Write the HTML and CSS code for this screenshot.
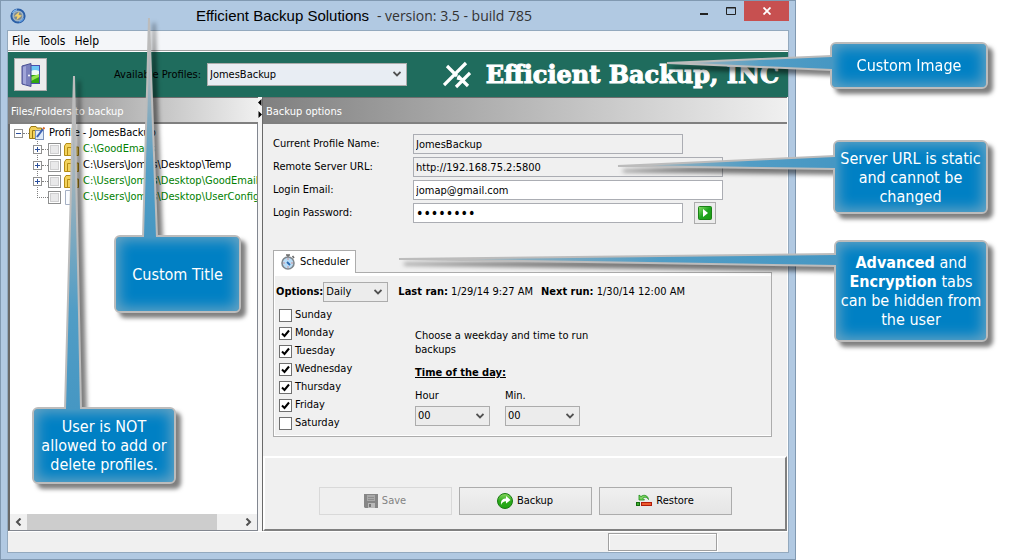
FILE: index.html
```
<!DOCTYPE html>
<html lang="en">
<head>
    <meta charset="UTF-8">
    <meta name="viewport" content="width=device-width, initial-scale=1.0">
    <title>Efficient Backup Solutions</title>
    <link rel="stylesheet" href="styles.css">
</head>
<body>
    <div class="window">
        <!-- Title bar -->
        <header class="title-bar">
            <svg class="app-icon" viewBox="0 0 16 16">
                <circle cx="8" cy="8" r="6.600" fill="#9fb4c6" stroke="#2a5ea6" stroke-width="2"/>
                <path d="M2.500 5 A6.300 6.300 0 0 1 7 1.800" stroke="#7db2e8" stroke-width="1.400" fill="none"/>
                <path d="M9 13.800 A6 6 0 0 0 13.600 10" stroke="#5f9be0" stroke-width="1.200" fill="none"/>
                <circle cx="8" cy="8" r="4" fill="#7d8a90"/>
                <path d="M9.500 3.500 L4 8.500 L7.400 8.600 L6.400 12.300 L12 7.400 L8.600 7 Z" fill="#f3d06a"/>
            </svg>
            <h1 class="title">Efficient Backup Solutions <span class="version">&nbsp;- version: 3.5 - build 785</span></h1>
            <div class="window-buttons">
                <button class="win-btn" aria-label="Minimize"><svg width="10" height="10" viewBox="0 0 10 10"><rect x="1" y="7" width="8" height="2" fill="#222"/></svg></button>
                <button class="win-btn" aria-label="Maximize"><svg width="10" height="10" viewBox="0 0 10 10"><path d="M.5 1.5 H9.5 V8.5 H.5 Z M0 2 H10" fill="none" stroke="#222"/></svg></button>
                <button class="win-btn close-btn" aria-label="Close"><svg width="8" height="8" viewBox="0 0 8 8"><path d="M.5 .5 L7.5 7.5 M7.5 .5 L.5 7.5" stroke="#fff" stroke-width="1.8"/></svg></button>
            </div>
        </header>

        <div class="client">
            <nav class="menu">
                <a href="#">File</a>
                <a href="#">Tools</a>
                <a href="#">Help</a>
            </nav>

            <!-- Toolbar -->
            <div class="toolbar">
                <button class="exit-btn" aria-label="Exit">
                    <svg width="20" height="24" viewBox="0 0 20 24">
                        <rect x="8" y="2" width="11" height="19" fill="#4a50ad"/>
                        <rect x="10" y="3" width="8" height="9" fill="#6cc6f5"/>
                        <path d="M10 8 Q14 6 18 8 V12 H10 Z" fill="#eefaf6"/>
                        <rect x="10" y="12" width="8" height="8" fill="#2fa50f"/>
                        <path d="M10 14 L18 11 V14 L10 18 Z" fill="#93e24c"/>
                        <path d="M1 3 L10 .5 V23.500 L1 21 Z" fill="#7a80bd" stroke="#4a4f94"/>
                        <path d="M2 4 L5 3 V21.500 L2 20.500 Z" fill="#a0a5d8"/>
                        <circle cx="8" cy="12.500" r="1" fill="#fff"/>
                    </svg>
                </button>
                <label class="profiles-label" for="profiles">Available Profiles:</label>
                <select id="profiles" class="select profiles">
                    <option>JomesBackup</option>
                </select>
                <div class="brand">
                    <svg width="28" height="28" viewBox="0 0 28 28">
                        <path d="M4 5 L14 15 M15 15 L25 25 M23 2 L1 24 M14 17 L18 18 M27 12 L13 26" stroke="#fff" stroke-width="3.200" fill="none"/>
                    </svg>
                    <span>Efficient Backup, INC</span>
                </div>
            </div>

            <main class="panels">
                <!-- Folder tree -->
                <section class="files">
                    <h2 class="panel-head">Files/Folders to backup</h2>
                    <div class="tree-box">
                        <div class="tree">
                            <div class="node root">
                                <button class="toggle" aria-label="Collapse">
                                    <svg width="9" height="9" viewBox="0 0 9 9"><rect x=".5" y=".5" width="8" height="8" fill="#fff" stroke="#919191"/><path d="M2 4.500 H7" stroke="#2b4f9c"/></svg>
                                </button>
                                <i class="dots"></i>
                                <svg width="16" height="14" viewBox="0 0 16 14">
                                    <path d="M.5 12.500 V3 L2 .5 H7 L8 2 H12.500 V12.500 Z" fill="#f3d25c" stroke="#9c7a14"/>
                                    <path d="M3.500 12.500 V4.500 H12" fill="none" stroke="#9c7a14"/>
                                    <rect x="6.500" y="4.500" width="8" height="9" fill="#dfeaf9" stroke="#7a93bd"/>
                                    <path d="M8 11 L14 3" stroke="#3b62b5" stroke-width="2"/>
                                    <path d="M14 3 L15.500 1.500" stroke="#d8662b" stroke-width="2"/>
                                </svg>
                                <span class="name">Profile - JomesBackup</span>
                            </div>
                            <ul>
                                <li class="node">
                                    <button class="toggle" aria-label="Expand"><svg width="9" height="9" viewBox="0 0 9 9"><rect x=".5" y=".5" width="8" height="8" fill="#fff" stroke="#919191"/><path d="M2 4.500 H7 M4.500 2 V7" stroke="#2b4f9c"/></svg></button>
                                    <i class="dots"></i>
                                    <input type="checkbox" id="f1">
                                    <svg width="15" height="13" viewBox="0 0 15 13"><path d="M.5 12.500 V3 L2 .5 H7 L8 2 H11.500 V4 H14.500 V12.500 Z" fill="#f3d25c" stroke="#b58c14"/><path d="M3.500 12.500 V4.500 H12 V12.500" fill="none" stroke="#b58c14"/></svg>
                                    <label class="name green" for="f1">C:\GoodEmails</label>
                                </li>
                                <li class="node">
                                    <button class="toggle" aria-label="Expand"><svg width="9" height="9" viewBox="0 0 9 9"><rect x=".5" y=".5" width="8" height="8" fill="#fff" stroke="#919191"/><path d="M2 4.500 H7 M4.500 2 V7" stroke="#2b4f9c"/></svg></button>
                                    <i class="dots"></i>
                                    <input type="checkbox" id="f2">
                                    <svg width="15" height="13" viewBox="0 0 15 13"><path d="M.5 12.500 V3 L2 .5 H7 L8 2 H11.500 V4 H14.500 V12.500 Z" fill="#f3d25c" stroke="#b58c14"/><path d="M3.500 12.500 V4.500 H12 V12.500" fill="none" stroke="#b58c14"/></svg>
                                    <label class="name" for="f2">C:\Users\Jomes\Desktop\Temp</label>
                                </li>
                                <li class="node">
                                    <button class="toggle" aria-label="Expand"><svg width="9" height="9" viewBox="0 0 9 9"><rect x=".5" y=".5" width="8" height="8" fill="#fff" stroke="#919191"/><path d="M2 4.500 H7 M4.500 2 V7" stroke="#2b4f9c"/></svg></button>
                                    <i class="dots"></i>
                                    <input type="checkbox" id="f3">
                                    <svg width="15" height="13" viewBox="0 0 15 13"><path d="M.5 12.500 V3 L2 .5 H7 L8 2 H11.500 V4 H14.500 V12.500 Z" fill="#f3d25c" stroke="#b58c14"/><path d="M3.500 12.500 V4.500 H12 V12.500" fill="none" stroke="#b58c14"/></svg>
                                    <label class="name green" for="f3">C:\Users\Jomes\Desktop\GoodEmailsi</label>
                                </li>
                                <li class="node leaf">
                                    <i class="dots"></i>
                                    <input type="checkbox" id="f4">
                                    <svg width="15" height="15" viewBox="0 0 15 15"><path d="M1.500 .5 H9 L12.500 4 V14.500 H1.500 Z" fill="#fafcff" stroke="#a5b0c4"/></svg>
                                    <label class="name green" for="f4">C:\Users\Jomes\Desktop\UserConfig-</label>
                                </li>
                            </ul>
                        </div>
                        <div class="scrollbar">
                            <button class="scroll-arrow" aria-label="Scroll left"><svg width="7" height="8" viewBox="0 0 7 8"><path d="M5.500 .5 L2 4 L5.500 7.500" fill="none" stroke="#505050" stroke-width="2"/></svg></button>
                            <div class="track"><div class="thumb"></div></div>
                            <button class="scroll-arrow" aria-label="Scroll right"><svg width="7" height="8" viewBox="0 0 7 8"><path d="M1.500 .5 L5 4 L1.500 7.500" fill="none" stroke="#505050" stroke-width="2"/></svg></button>
                        </div>
                    </div>
                </section>

                <div class="splitter">
                    <svg width="4" height="22" viewBox="0 0 4 22"><path d="M3.500 2 V9 L0 5.500 Z M.5 14 V21 L4 17.500 Z" fill="#000"/></svg>
                </div>

                <!-- Backup options -->
                <section class="options">
                    <h2 class="panel-head">Backup options</h2>
                    <div class="options-body">
                        <form class="fields">
                            <label for="profile-name">Current Profile Name:</label>
                            <div><input class="short" type="text" id="profile-name" value="JomesBackup" readonly></div>
                            <label for="server-url">Remote Server URL:</label>
                            <div><input type="text" id="server-url" value="http://192.168.75.2:5800" readonly></div>
                            <label for="email">Login Email:</label>
                            <div><input type="text" id="email" value="jomap@gmail.com"></div>
                            <label for="password">Login Password:</label>
                            <div class="password-row">
                                <input class="short" type="password" id="password" value="password">
                                <button type="button" class="go-btn" aria-label="Connect">
                                    <svg width="14" height="14" viewBox="0 0 14 14">
                                        <defs><linearGradient id="go" x1="0" y1="0" x2="1" y2="1"><stop offset="0" stop-color="#8be06a"/><stop offset=".5" stop-color="#1fa51f"/><stop offset="1" stop-color="#1c9a10"/></linearGradient></defs>
                                        <rect x=".5" y=".5" width="13" height="13" rx="1" fill="url(#go)" stroke="#1b8116"/>
                                        <path d="M5 3 L10 7 L5 11 Z" fill="#fff"/>
                                    </svg>
                                </button>
                            </div>
                        </form>

                        <div class="tabs">
                            <button class="tab">
                                <svg width="14" height="16" viewBox="0 0 14 16">
                                    <path d="M5 1 H9 M7 1 V3 M11.500 2 L13 4" stroke="#6a6a6a" stroke-width="1.600"/>
                                    <circle cx="7" cy="9" r="6" fill="#b9dcf6" stroke="#7f868c" stroke-width="1.600"/>
                                    <path d="M6 8 L9 11" stroke="#2869b0" stroke-width="1.800"/>
                                    <path d="M7 4.500 V5.500 M7 12.500 V13.500 M2.500 9 H3.500 M10.500 9 H11.500" stroke="#e0503c"/>
                                </svg>
                                Scheduler
                            </button>
                        </div>
                        <div class="tab-pane">
                            <div class="schedule-row">
                                <label for="period"><b>Options:</b></label>
                                <select id="period" class="select period"><option>Daily</option></select>
                                <span class="ran"><b>Last ran:</b> 1/29/14 9:27 AM</span>
                                <span class="next"><b>Next run:</b> 1/30/14 12:00 AM</span>
                            </div>
                            <div class="schedule-body">
                                <div class="days">
                                    <label><input type="checkbox">Sunday</label>
                                    <label><input type="checkbox" checked>Monday</label>
                                    <label><input type="checkbox" checked>Tuesday</label>
                                    <label><input type="checkbox" checked>Wednesday</label>
                                    <label><input type="checkbox" checked>Thursday</label>
                                    <label><input type="checkbox" checked>Friday</label>
                                    <label><input type="checkbox">Saturday</label>
                                </div>
                                <div class="time">
                                    <p class="hint">Choose a weekday and time to run backups</p>
                                    <h3>Time of the day:</h3>
                                    <div class="time-selects">
                                        <div>
                                            <label for="hour">Hour</label>
                                            <select id="hour" class="select"><option>00</option></select>
                                        </div>
                                        <div>
                                            <label for="min">Min.</label>
                                            <select id="min" class="select"><option>00</option></select>
                                        </div>
                                    </div>
                                </div>
                            </div>
                        </div>
                    </div>

                    <div class="actions">
                        <button class="action-btn" disabled>
                            <svg width="14" height="14" viewBox="0 0 14 14"><path d="M0 0 H14 V14 H1 L0 13 Z" fill="#868686"/><rect x="3" y="1" width="8" height="6" fill="#a9a9a9"/><path d="M4 3.500 H10 M4 5.500 H10" stroke="#8d8d8d"/><rect x="4" y="9" width="7" height="5" fill="#b9b9b9"/><rect x="5" y="10" width="2" height="3" fill="#777"/></svg>
                            Save
                        </button>
                        <button class="action-btn">
                            <svg width="16" height="16" viewBox="0 0 16 16">
                                <defs><linearGradient id="ball" x1="0" y1="0" x2="0" y2="1"><stop offset="0" stop-color="#8ad85f"/><stop offset=".5" stop-color="#2cab1c"/><stop offset="1" stop-color="#1fa312"/></linearGradient></defs>
                                <circle cx="8" cy="8" r="7.500" fill="url(#ball)" stroke="#187a12"/>
                                <path d="M4 12 C3.500 7 6 5.500 9 5.500 V3 L13.500 7 L9 10.500 V8.300 C6.500 8.300 5 9.500 4 12 Z" fill="#fff"/>
                            </svg>
                            Backup
                        </button>
                        <button class="action-btn restore">
                            <svg width="16" height="14" viewBox="0 0 16 14">
                                <rect x=".5" y="8.500" width="3" height="3" fill="#3fae2c" stroke="#146b0f"/>
                                <rect x="5.500" y="8.500" width="10" height="3" fill="#ee5a2c" stroke="#b01c0c"/>
                                <path d="M3 1 V6 H8.500 L6.800 4.300 C8.500 2.500 11 3 12.500 5.500 C12 1.500 8 0 5 2.600 Z" fill="#7dd460" stroke="#178a14" stroke-width=".8"/>
                            </svg>
                            Restore
                        </button>
                    </div>
                </section>
            </main>

            <footer class="status-bar"><div class="status-cell"></div></footer>
        </div>
    </div>

    <!-- Callouts -->
    <aside class="callout callout-image">
        <svg class="tail" width="166" height="16" viewBox="0 0 166 16">
            <defs><linearGradient id="tail-h"><stop offset="0" stop-color="#b9bcbd"/><stop offset=".3" stop-color="#84acc0"/><stop offset=".6" stop-color="#529dc5"/><stop offset="1" stop-color="#4697c3"/></linearGradient></defs>
            <path d="M166 1 L1 8 L166 15" fill="url(#tail-h)" stroke="#bcbcbc" stroke-width="2"/>
        </svg>
        <p>Custom Image</p>
    </aside>
    <aside class="callout callout-url">
        <svg class="tail" width="218" height="16" viewBox="0 0 218 16">
            <path d="M218 2 L1 12 L218 15" fill="url(#tail-h)" stroke="#bcbcbc" stroke-width="2"/>
        </svg>
        <p>Server URL is static and cannot be changed</p>
    </aside>
    <aside class="callout callout-tabs">
        <svg class="tail" width="438" height="16" viewBox="0 0 438 16">
            <path d="M438 2 L1 7 L438 14" fill="url(#tail-h)" stroke="#bcbcbc" stroke-width="2"/>
        </svg>
        <p><b>Advanced</b> and <b>Encryption</b> tabs can be hidden from the user</p>
    </aside>
    <aside class="callout callout-title">
        <svg class="tail" width="16" height="220" viewBox="0 0 16 220">
            <defs><linearGradient id="tail-v" x1="0" y1="0" x2="0" y2="1"><stop offset="0" stop-color="#b9bcbd"/><stop offset=".3" stop-color="#a0b3bc"/><stop offset=".7" stop-color="#529dc5"/><stop offset="1" stop-color="#4697c3"/></linearGradient></defs>
            <path d="M1 220 L7 1 L15 220" fill="url(#tail-v)" stroke="#bcbcbc" stroke-width="2"/>
        </svg>
        <p>Custom Title</p>
    </aside>
    <aside class="callout callout-profiles">
        <svg class="tail" width="18" height="334" viewBox="0 0 18 334">
            <path d="M1 334 L10 1 L17 334" fill="url(#tail-v)" stroke="#bcbcbc" stroke-width="2"/>
        </svg>
        <p>User is NOT allowed to add or delete profiles.</p>
    </aside>
</body>
</html>
```
FILE: styles.css
```
* {
    margin: 0;
    padding: 0;
    box-sizing: border-box;
}
body {
    position: relative;
    min-height: 100vh;
    padding-right: 217px;
    display: flex;
    background: white;
    color: black;
    font-family: "DejaVu Sans Condensed", "DejaVu Sans", sans-serif;
    font-size: 11px;
    line-height: 14px;
}
button, input, select {
    font: inherit;
    color: inherit;
}
svg {
    display: block;
    flex: none;
}
.window {
    flex: 1;
    display: flex;
    flex-direction: column;
    border: 1px solid #8199b1;
    background: #b1c9e2;
    padding: 0 6px 6px;
}

/* Title bar */
.title-bar {
    display: flex;
    align-items: flex-start;
    height: 29px;
}
.app-icon {
    width: 16px;
    height: 16px;
    margin: 7px 0 0 3px;
}
.title {
    flex: 1;
    padding-left: 12px;
    text-align: center;
    font-family: "Liberation Sans", Arial, sans-serif;
    font-size: 15px;
    font-weight: normal;
    line-height: 29px;
}
.version {
    font-family: "Open Sans", sans-serif;
    font-size: 14px;
    color: #333;
}
.window-buttons {
    display: flex;
}
.win-btn {
    width: 27px;
    height: 20px;
    display: flex;
    align-items: center;
    justify-content: center;
    border: none;
    background: none;
}
.close-btn {
    width: 45px;
    background: #c75050;
}

/* Client area */
.client {
    flex: 1;
    display: flex;
    flex-direction: column;
    border: 1px solid #93a9be;
    background: #f0f0f0;
}
.menu {
    display: flex;
    gap: 9px;
    padding: 2px 4px;
    height: 20px;
    background: #f4f6f9;
    border-bottom: 1px solid #a0a0a0;
    font-size: 12px;
    line-height: 16px;
}
.menu a {
    color: black;
    text-decoration: none;
}
.toolbar {
    display: flex;
    align-items: center;
    height: 46px;
    padding: 0 9px 0 6px;
    border-top: 1px solid white;
    background: #1f6c5d;
}
.exit-btn {
    width: 33px;
    height: 33px;
    display: flex;
    align-items: center;
    justify-content: center;
    border: 1px solid #adadad;
    background: #ececec;
}
.profiles-label {
    flex: 0 0 154px;
    text-align: right;
    margin-right: 6px;
}
.select {
    appearance: none;
    height: 20px;
    padding: 0 16px 0 2px;
    border: 1px solid #acacac;
    border-radius: 0;
    background: #ececec url("data:image/svg+xml,%3Csvg xmlns='http://www.w3.org/2000/svg' width='8' height='7'%3E%3Cpath d='M.5 1 L4 4.500 L7.500 1' fill='none' stroke='%23505050' stroke-width='1.800'/%3E%3C/svg%3E") no-repeat right 5px center;
}
.profiles {
    flex: 0 0 200px;
    height: 23px;
    background-color: #e8edf3;
}
.brand {
    flex: 1;
    display: flex;
    align-items: center;
    justify-content: flex-end;
    gap: 15px;
    color: white;
    font-family: "DejaVu Serif", serif;
    font-size: 24px;
    font-weight: bold;
    line-height: 28px;
    white-space: nowrap;
    -webkit-text-stroke: 1px white;
}

/* Panels */
.panels {
    flex: 1;
    display: flex;
    min-height: 0;
}
.panel-head {
    height: 27px;
    padding: 0 3px;
    border-top: 1px solid #6e6e6e;
    border-bottom: 2px solid #808080;
    background: linear-gradient(to right, #808080, #f0f0f0);
    color: white;
    font-size: 11px;
    font-weight: normal;
    line-height: 27px;
}
.files {
    flex: 0 0 250px;
    min-width: 0;
    display: flex;
    flex-direction: column;
}
.tree-box {
    flex: 1;
    display: flex;
    flex-direction: column;
    border: 1px solid #828790;
    border-left: 2px solid #696969;
    border-top: none;
    background: white;
}
.tree {
    flex: 1;
    overflow: hidden;
    padding: 1px 0 0 4px;
}
.tree ul {
    list-style: none;
    padding-left: 19px;
    background: repeating-linear-gradient(#808080 0 1px, white 1px 2px) no-repeat 23px 0 / 1px 56px;
}
.node {
    display: flex;
    align-items: center;
    height: 16px;
    white-space: nowrap;
}
.toggle {
    flex: none;
    border: none;
    background: none;
}
.dots {
    flex: none;
    width: 6px;
    border-top: 1px dotted #808080;
}
.leaf {
    padding-left: 4px;
}
.leaf .dots {
    width: 11px;
}
.node input {
    flex: none;
    appearance: none;
    width: 13px;
    height: 13px;
    margin-right: 3px;
    border: 1px solid #8e8f8f;
    background: #e9e9ea;
    box-shadow: inset 0 0 0 1px white, inset 0 0 0 2px #cfcfd0;
}
.name {
    margin-left: 4px;
}
.green {
    color: #008000;
}
.scrollbar {
    display: flex;
    height: 16px;
    background: #f0f0f0;
}
.scroll-arrow {
    width: 17px;
    display: flex;
    align-items: center;
    justify-content: center;
    border: none;
    background: none;
}
.track {
    flex: 1;
}
.thumb {
    width: 89%;
    height: 100%;
    background: #cdcdcd;
}
.splitter {
    flex: 0 0 4px;
    background: #f5f5f5;
}
.options {
    flex: 1;
    display: flex;
    flex-direction: column;
    border-left: 1px solid #696969;
    border-right: 1px solid white;
}
.options-body {
    flex: 1;
    padding: 10px 15px 0 10px;
}
.fields {
    display: grid;
    grid-template-columns: 140px 1fr;
    row-gap: 3px;
    align-items: center;
}
.fields input {
    display: block;
    width: 310px;
    height: 20px;
    padding: 0 2px;
    border: 1px solid #abadb3;
    background: white;
    outline: none;
}
.fields input.short {
    width: 270px;
}
.fields input[readonly] {
    background: #f0f0f0;
}
.fields input[type="password"] {
    font-size: 14px;
}
.password-row {
    display: flex;
    align-items: center;
    gap: 11px;
    height: 20px;
}
.go-btn {
    width: 22px;
    height: 22px;
    display: flex;
    align-items: center;
    justify-content: center;
    border: 1px solid #acacac;
    background: #ececec;
}

/* Scheduler tab */
.tabs {
    display: flex;
    margin-top: 27px;
}
.tab {
    position: relative;
    z-index: 1;
    display: flex;
    align-items: center;
    gap: 5px;
    height: 23px;
    margin-bottom: -1px;
    padding: 0 5px 0 7px;
    border: 1px solid #acacac;
    border-bottom: none;
    background: white;
}
.tab-pane {
    padding: 5px 3px 4px 2px;
    border: 1px solid #acacac;
    background: #f0f0f0;
    box-shadow: inset 0 3px 0 white, inset 1px -1px 0 white;
}
.schedule-row {
    display: flex;
    align-items: center;
    height: 28px;
}
.period {
    width: 65px;
    margin-right: 10px;
}
.next {
    margin-left: 8px;
}
.schedule-body {
    display: flex;
}
.days {
    width: 139px;
    padding-left: 3px;
}
.days label {
    display: flex;
    align-items: center;
    gap: 3px;
    height: 18px;
}
.days input {
    appearance: none;
    width: 13px;
    height: 13px;
    border: 1px solid #707070;
    background: white no-repeat center;
}
.days input:checked {
    background-image: url("data:image/svg+xml,%3Csvg xmlns='http://www.w3.org/2000/svg' width='9' height='9'%3E%3Cpath d='M1 4.500 L3.500 7 L8 1.500' fill='none' stroke='black' stroke-width='2'/%3E%3C/svg%3E");
}
.time {
    padding-top: 23px;
}
.hint {
    width: 190px;
}
.time h3 {
    margin: 9px 0;
    font-size: 11px;
    line-height: 14px;
    text-decoration: underline;
}
.time-selects {
    display: flex;
    gap: 15px;
}
.time-selects label {
    display: block;
    margin-bottom: 3px;
}
.time-selects .select {
    display: block;
    width: 75px;
}

/* Bottom buttons */
.actions {
    display: flex;
    justify-content: center;
    align-items: center;
    gap: 7px;
    height: 75px;
    padding-top: 14px;
    border: 2px solid #808080;
    border-color: white #808080 #808080 white;
}
.action-btn {
    width: 133px;
    height: 28px;
    display: flex;
    align-items: center;
    justify-content: center;
    gap: 4px;
    border: 1px solid #acacac;
    background: linear-gradient(#f0f0f0, #e5e5e5);
}
.action-btn:disabled {
    border-color: #d9d9d9;
    background: #efefef;
    color: #838383;
}
.status-bar {
    height: 21px;
    display: flex;
    justify-content: flex-end;
    padding: 1px 71px 1px 0;
    border-top: 1px solid white;
}
.status-cell {
    width: 109px;
    border: 1px solid #a0a0a0;
    box-shadow: inset 1px 1px 0 white, 1px 1px 0 white;
}

/* Callouts */
.callout {
    position: absolute;
    display: flex;
    align-items: center;
    justify-content: center;
    border: 2px solid #bcbcbc;
    border-radius: 6px;
    background: #0080c4;
    box-shadow: inset 0 0 14px 3px #6aa5c4;
    filter: drop-shadow(5px 5px 2px rgba(0, 0, 0, 0.5));
    color: white;
    font-size: 16px;
    line-height: 19px;
    text-align: center;
}
.callout b {
    display: inline-block;
}
.tail {
    position: absolute;
}
.callout-image {
    top: 42px;
    right: 25px;
    width: 158px;
    height: 47px;
}
.callout-image .tail {
    right: 100%;
    top: 11px;
}
.callout-url {
    top: 140px;
    right: 25px;
    width: 155px;
    height: 74px;
}
.callout-url .tail {
    right: 100%;
    top: 12px;
}
.callout-tabs {
    top: 240px;
    right: 25px;
    width: 154px;
    height: 102px;
}
.callout-tabs .tail {
    right: 100%;
    top: 10px;
}
.callout-title {
    top: 235px;
    left: 114px;
    width: 127px;
    height: 78px;
}
.callout-title .tail {
    bottom: 100%;
    left: 26px;
}
.callout-profiles {
    top: 407px;
    left: 32px;
    width: 144px;
    height: 77px;
}
.callout-profiles .tail {
    bottom: 100%;
    left: 30px;
}
```
